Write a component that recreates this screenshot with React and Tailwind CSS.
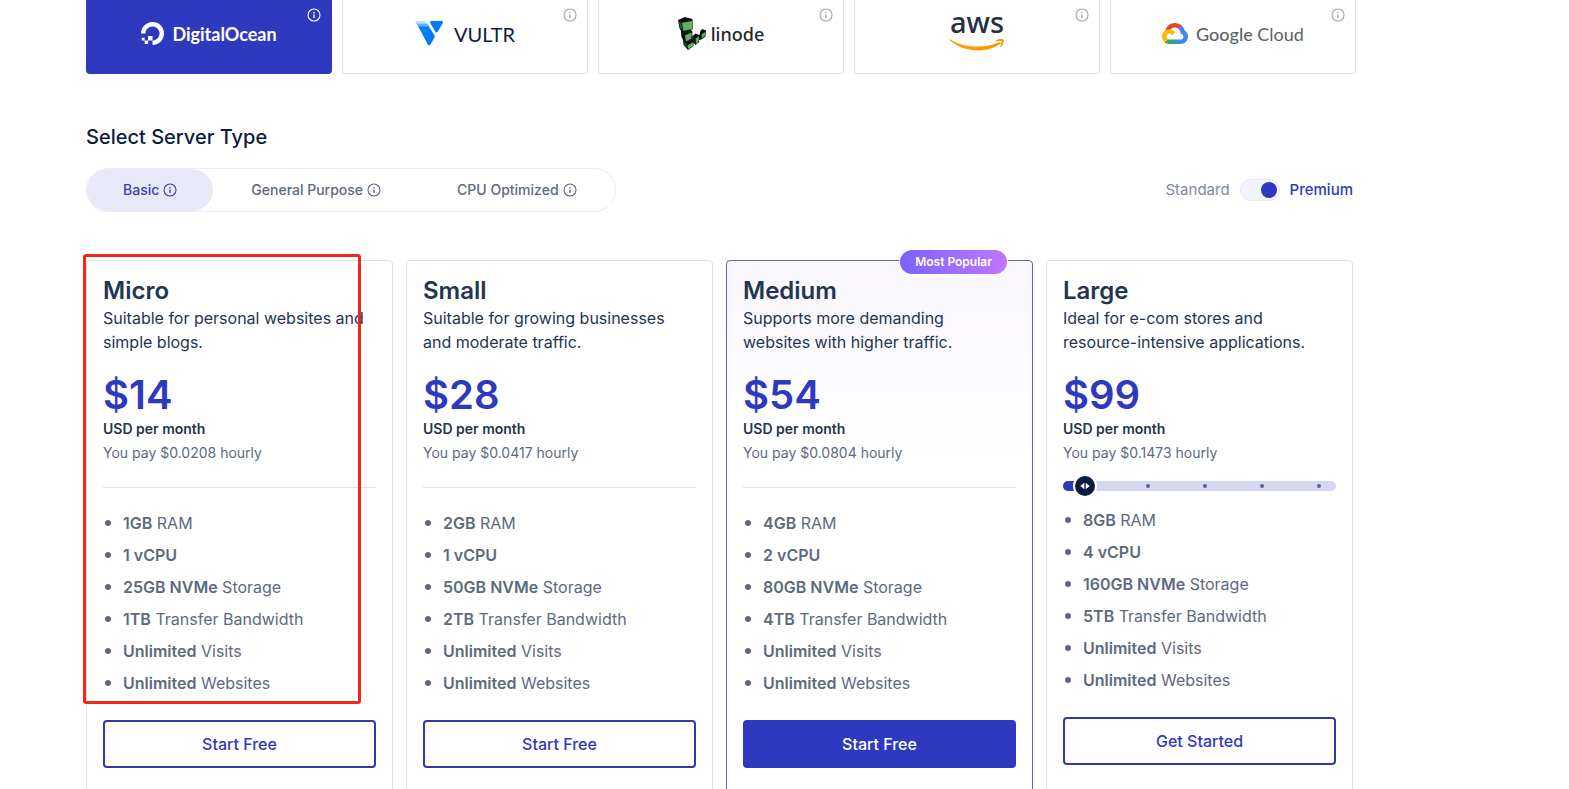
import { useState } from "react";

function InfoIcon({ className = "" }) {
  return (
    <svg aria-hidden="true" viewBox="0 0 14 14" className={`size-[14px] shrink-0 ${className}`}>
      <circle cx="7" cy="7" r="6" fill="none" stroke="currentColor" strokeWidth="1.1" />
      <rect x="6.3" y="3.9" width="1.4" height="1.5" fill="currentColor" />
      <rect x="6.3" y="6.5" width="1.4" height="3.5" fill="currentColor" />
    </svg>
  );
}

function DigitalOceanLogo() {
  return (
    <span className="flex items-center gap-2">
      <svg aria-hidden="true" viewBox="0 0 24 24" className="size-[23px]" fill="#fff">
        <path d="M12.04 0C5.408-.02.005 5.37.005 11.992h4.638c0-4.923 4.882-8.731 10.064-6.855a6.95 6.95 0 014.147 4.148c1.889 5.177-1.924 10.055-6.84 10.064v-4.61H7.391v4.623h4.61V24c7.86 0 13.967-7.588 11.397-15.83-1.115-3.59-3.985-6.446-7.575-7.575A12.8 12.8 0 0012.039 0zM7.39 19.362H3.828v3.564H7.39zm-3.563 0v-2.978H.85v2.978z" />
      </svg>
      <span className="font-['Lato',sans-serif] text-[18px] font-bold leading-6 text-white">DigitalOcean</span>
    </span>
  );
}

function VultrLogo() {
  return (
    <span className="flex items-center gap-[11px]">
      <svg aria-hidden="true" viewBox="0 0 28 25" className="h-[25px] w-[28px]">
        <path d="M0 0h9.5c1 0 1.500.4 2 1.200L13 3.500H1.800z" fill="#b5e3fb" />
        <path d="M1.600 2.800h11l2 3.500H3.600z" fill="#51b9ff" />
        <path d="M3.200 5.500h10.700l5.600 9c.4.700.4 1.300 0 2l-4.200 7.300c-.6 1-1.700 1-2.300 0z" fill="#007bfc" />
        <path d="M16.500 0h10c1.300 0 1.900 1 1.200 2.200l-5 8.600c-.6 1-1.700 1-2.300 0l-4.900-8.200C14.800 1.200 15.200 0 16.500 0z" fill="#007bfc" />
      </svg>
      <span className="font-['Lato',sans-serif] text-[20px] leading-6 text-[#0e1b3d]">VULTR</span>
    </span>
  );
}

function LinodeLogo() {
  return (
    <span className="flex items-center gap-[5px]">
      <svg aria-hidden="true" viewBox="0 0 28 33" className="h-[33px] w-[28px]">
        <path d="M0 3 7 0l7.500 2 .2 10L13 13l1.500 2-.3 6 1.300 3v5L10 33l-4.500-5-.5-5-1.700-3.500L3 14l-1.600-3z" fill="#111" />
        <path d="M4 5.800 14 4v8L5.400 14z" fill="#5fb25f" />
        <path d="M1 4.800l2.300 1.500 1.200 7L2 10.800z" fill="#2c5a2f" />
        <path d="M7 18.200l6.700-2.600-.2 5.800L8 24.500z" fill="#5fb25f" />
        <path d="M9.500 28.400l5.300-3.200.5 3.600L10.400 32z" fill="#5fb25f" />
        <path d="M6.200 24.800l2.300 3.200.9 3.600-2.900-3.400z" fill="#2c5a2f" />
        <path d="M14 19.500l3.500-3 4 1.500 1-4.500 2-1.500 3.500 1.500-.5 6-4 3-2.500.5v2L17.500 28 15 25z" fill="#111" />
        <path d="M17.600 21.500l3.200-2.200v4.500L18 27z" fill="#5fb25f" />
        <path d="M23.800 17.300l3.500-2.300-.3 3.700-3 2.500z" fill="#5fb25f" />
      </svg>
      <span className="font-['Noto_Sans',sans-serif] text-[18px] font-medium leading-6 text-[#262626]">linode</span>
    </span>
  );
}

function AwsLogo() {
  return (
    <span className="flex flex-col items-center gap-1 pb-[6px]">
      <span className="font-['Noto_Sans',sans-serif] text-[29px] font-medium leading-6 text-[#252f3e]">aws</span>
      <svg aria-hidden="true" viewBox="0 0 56 13" className="h-[13px] w-[56px]" fill="#ff9900">
        <path d="M.3 2C-.1 1.400.5 1 1.200 1.400 16 10 35 10.800 50.500 4.300c1.200-.5 2.100.7 1 1.500C37 16 15.500 14.500.3 2z" />
        <path d="M54.500 1.600c-1.400-1-5-.9-7.400.6-.8.500-.6 1.100.2 1 2-.2 4.600-.5 5.200.1.600.7-.6 3.600-1.300 5.300-.2.600.3.800.8.300 2.700-2.200 3.400-6.600 2.500-7.300z" />
      </svg>
    </span>
  );
}

function GoogleCloudLogo() {
  return (
    <span className="flex items-center gap-2">
      <svg aria-hidden="true" viewBox="0 0 256 206" className="h-[21px] w-[26px]">
        <path fill="#EA4335" d="M170.252 56.819l22.253-22.253 1.483-9.370C153.437-11.677 88.976-7.496 52.420 33.920 42.267 45.423 34.734 59.764 30.717 74.573l7.970-1.123 44.505-7.340 3.436-3.513c19.797-21.742 53.270-24.667 76.128-6.168l7.496.39z" />
        <path fill="#4285F4" d="M224.205 73.918a100.249 100.249 0 0 0-30.217-48.722l-31.232 31.232a55.515 55.515 0 0 1 20.379 44.037v5.544c15.350 0 27.797 12.445 27.797 27.796 0 15.352-12.446 27.573-27.797 27.573h-55.671l-5.466 5.934v33.340l5.466 5.231h55.670c39.930.311 72.553-31.494 72.864-71.424a72.303 72.303 0 0 0-31.793-60.541" />
        <path fill="#34A853" d="M71.870 205.796h55.593V161.290H71.870a27.275 27.275 0 0 1-11.400-2.498l-7.887 2.420-22.409 22.253-1.952 7.574c12.567 9.489 27.900 14.825 43.647 14.757" />
        <path fill="#FBBC05" d="M71.870 61.425C31.940 61.664-.237 94.228.001 134.158a72.301 72.301 0 0 0 28.222 56.880l32.248-32.246c-13.990-6.322-20.208-22.786-13.887-36.776 6.320-13.990 22.786-20.208 36.775-13.888a27.796 27.796 0 0 1 13.887 13.888l32.248-32.248A72.224 72.224 0 0 0 71.870 61.425" />
      </svg>
      <span className="whitespace-nowrap font-['Lato',sans-serif] text-[18px] leading-6 text-[#5f6368]">
        <span className="font-medium">Google</span> Cloud
      </span>
    </span>
  );
}

const providers = [
  { name: "DigitalOcean", Logo: DigitalOceanLogo },
  { name: "Vultr", Logo: VultrLogo },
  { name: "Linode", Logo: LinodeLogo },
  { name: "AWS", Logo: AwsLogo },
  { name: "Google Cloud", Logo: GoogleCloudLogo },
];

const serverTypes = ["Basic", "General Purpose", "CPU Optimized"];

const plans = [
  { name: "Micro", text: "Suitable for personal websites and simple blogs.", price: "$14", hourly: "$0.0208", ram: "1GB", cpu: "1 vCPU", disk: "25GB NVMe", transfer: "1TB", action: "Start Free", marked: true },
  { name: "Small", text: "Suitable for growing businesses and moderate traffic.", price: "$28", hourly: "$0.0417", ram: "2GB", cpu: "1 vCPU", disk: "50GB NVMe", transfer: "2TB", action: "Start Free" },
  { name: "Medium", text: "Supports more demanding websites with higher traffic.", price: "$54", hourly: "$0.0804", ram: "4GB", cpu: "2 vCPU", disk: "80GB NVMe", transfer: "4TB", action: "Start Free", popular: true },
  { name: "Large", text: "Ideal for e-com stores and resource-intensive applications.", price: "$99", hourly: "$0.1473", ram: "8GB", cpu: "4 vCPU", disk: "160GB NVMe", transfer: "5TB", action: "Get Started", slider: true },
];

function SizeSlider() {
  return (
    <label className="relative mt-4 mb-[17px] flex h-[10px] items-center rounded-full bg-[#d5d7f0]">
      <span className="h-full w-3 rounded-l-full bg-[#2f39bf]" />
      <span className="flex size-5 shrink-0 items-center justify-center rounded-full bg-[#0b1b3f] ring-2 ring-white">
        <svg aria-hidden="true" viewBox="0 0 10 8" className="h-2 w-[10px]" fill="#fff">
          <path d="M4.300 .8v6.400L.3 4zM5.700 .8v6.400l4-3.200z" />
        </svg>
      </span>
      <span className="flex flex-1 justify-between pr-[15px] pl-[51px]">
        <span className="size-1 rounded-full bg-[#5c628f]" />
        <span className="size-1 rounded-full bg-[#5c628f]" />
        <span className="size-1 rounded-full bg-[#5c628f]" />
        <span className="size-1 rounded-full bg-[#5c628f]" />
      </span>
      <input type="range" min="0" max="4" defaultValue="0" aria-label="Large plan size" className="absolute inset-0 w-full cursor-pointer opacity-0" />
    </label>
  );
}

function Feature({ strong, children }) {
  return (
    <li className="flex items-center gap-3 leading-6">
      <span className="ml-[2px] size-[6px] rounded-full bg-[#5d6a7e]" />
      <span>
        <strong className="font-semibold">{strong}</strong> {children}
      </span>
    </li>
  );
}

function PlanCard({ plan }) {
  const frame = plan.popular
    ? "border-[#6a5cc4] bg-linear-to-b from-[#f9f6ff] to-white to-[200px]"
    : "border-[#dfe0e3] bg-white";
  const button = plan.popular ? "border-[#2f39bf] bg-[#2f39bf] text-white" : "border-[#2f39a8] bg-white text-[#2f39bf]";
  return (
    <article className={`relative flex flex-col rounded-[4px] border px-4 pt-[15px] pb-6 ${frame}`}>
      {plan.popular && (
        <span className="absolute -top-[11px] right-[25px] flex h-6 items-center rounded-full bg-linear-to-r from-[#7b61ff] to-[#c077fc] px-[15px] text-xs font-semibold text-white ring-1 ring-white">
          Most Popular
        </span>
      )}
      {plan.marked && (
        <span className="pointer-events-none absolute -top-[7px] -left-1 h-[450px] w-[278px] rounded-[3px] border-3 border-[#f0261f]" />
      )}
      <h3 className="text-2xl leading-[30px] font-semibold text-[#243550]">{plan.name}</h3>
      <p className="pr-2 leading-6 text-[#243550]">{plan.text}</p>
      <p className="mt-[19px] text-[40px] leading-[44px] font-semibold text-[#2f39bf]">{plan.price}</p>
      <p className="text-sm leading-6 font-semibold text-[#243550]">USD per month</p>
      <p className="text-sm leading-6 text-[#5d6a7e]">You pay {plan.hourly} hourly</p>
      {plan.slider ? <SizeSlider /> : <hr className="mt-[22px] mb-[23px] border-[#dfe0e3]" />}
      <ul className="flex flex-col gap-2 text-[#5d6a7e]">
        <Feature strong={plan.ram}>RAM</Feature>
        <Feature strong={plan.cpu} />
        <Feature strong={plan.disk}>Storage</Feature>
        <Feature strong={plan.transfer}>Transfer Bandwidth</Feature>
        <Feature strong="Unlimited">Visits</Feature>
        <Feature strong="Unlimited">Websites</Feature>
      </ul>
      <button type="button" className={`mt-[25px] h-12 rounded-[4px] border-2 font-medium ${button}`}>
        {plan.action}
      </button>
    </article>
  );
}

export default function App() {
  const [provider, setProvider] = useState("DigitalOcean");
  const [type, setType] = useState("Basic");
  const [premium, setPremium] = useState(true);
  return (
    <main className="min-h-screen bg-white pl-[86px] font-['Inter',sans-serif] text-base">
      <div className="mr-[213px] grid grid-cols-5 gap-[10px]">
        {providers.map(({ name, Logo }) => (
          <button
            key={name}
            type="button"
            aria-label={name}
            onClick={() => setProvider(name)}
            className={`relative flex h-[74px] items-center justify-center rounded-b-[4px] border border-t-0 pb-[6px] ${
              provider === name ? "border-[#2f39bf] bg-[#2f39bf] text-white" : "border-[#dfe0e3] bg-white text-[#a3a9b3]"
            }`}
          >
            <Logo />
            <InfoIcon className="absolute top-2 right-[10px]" />
          </button>
        ))}
      </div>

      <section className="mr-[216px]">
        <h2 className="mt-12 text-xl leading-[30px] font-medium text-[#0b1b3f]">Select Server Type</h2>

        <div className="mt-4 flex items-center justify-between">
          <div className="flex h-11 rounded-full border border-[#ececf1] text-sm font-medium">
            {serverTypes.map((name) => (
              <button
                key={name}
                type="button"
                onClick={() => setType(name)}
                className={`flex items-center gap-1 rounded-full ${name === "Basic" ? "px-9" : "px-[38px]"} ${
                  type === name ? "bg-[#e8e9f7] text-[#3f3fae]" : "text-[#5d6a7e]"
                }`}
              >
                {name}
                <InfoIcon />
              </button>
            ))}
          </div>
          <div className="flex items-center gap-[10px] text-[15px] font-medium">
            <span className="font-normal text-[#828c98]">Standard</span>
            <button
              type="button"
              role="switch"
              aria-checked={premium}
              aria-label="Premium servers"
              onClick={() => setPremium(!premium)}
              className={`flex h-[22px] w-10 items-center rounded-full border border-[#e6e7f2] bg-[#f3f4fd] px-[2px] ${premium ? "justify-end" : "justify-start"}`}
            >
              <span className="size-4 rounded-full bg-[#2f39bf]" />
            </button>
            <span className="text-[#2f39bf]">Premium</span>
          </div>
        </div>

        <div className="mt-12 grid grid-cols-4 gap-[13px]">
          {plans.map((plan) => (
            <PlanCard key={plan.name} plan={plan} />
          ))}
        </div>
      </section>
    </main>
  );
}
